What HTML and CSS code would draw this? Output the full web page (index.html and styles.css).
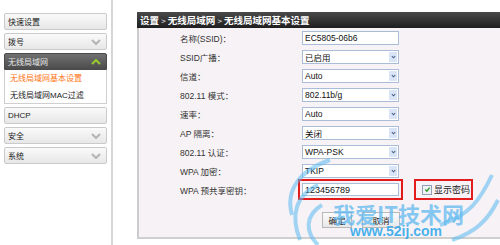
FILE: index.html
```html
<!DOCTYPE html>
<html lang="zh-CN">
<head>
    <meta charset="UTF-8">
    <title>无线局域网基本设置</title>
    <link rel="stylesheet" href="styles.css">
</head>
<body>
    <div class="page">
        <!-- 左侧菜单 -->
        <aside class="sidebar">
            <div class="menu-item">快速设置</div>
            <div class="menu-item">拨号
                <svg class="chevron" viewBox="0 0 10 6"><path d="M1 1 L5 5 L9 1"/></svg>
            </div>
            <div class="menu-group">
                <div class="menu-head">无线局域网
                    <svg class="chevron up" viewBox="0 0 10 6"><path d="M1 5 L5 1 L9 5"/></svg>
                </div>
                <ul class="submenu">
                    <li class="active">无线局域网基本设置</li>
                    <li>无线局域网MAC过滤</li>
                </ul>
            </div>
            <div class="menu-item">DHCP</div>
            <div class="menu-item">安全
                <svg class="chevron" viewBox="0 0 10 6"><path d="M1 1 L5 5 L9 1"/></svg>
            </div>
            <div class="menu-item">系统
                <svg class="chevron" viewBox="0 0 10 6"><path d="M1 1 L5 5 L9 1"/></svg>
            </div>
        </aside>

        <!-- 设置面板 -->
        <main class="panel">
            <div class="panel-title">设置 <span class="sep">&gt;</span> 无线局域网 <span class="sep">&gt;</span> 无线局域网基本设置</div>
            <div class="panel-body">
                <div class="row">
                    <span class="label">名称(SSID)：</span>
                    <span class="text-input">EC5805-06b6</span>
                </div>
                <div class="row">
                    <span class="label">SSID广播：</span>
                    <span class="select"><span class="value">已启用</span><span class="arrow"><svg viewBox="0 0 6 4"><path d="M1 1 L3 3 L5 1"/></svg></span></span>
                </div>
                <div class="row">
                    <span class="label">信道：</span>
                    <span class="select"><span class="value">Auto</span><span class="arrow"><svg viewBox="0 0 6 4"><path d="M1 1 L3 3 L5 1"/></svg></span></span>
                </div>
                <div class="row">
                    <span class="label">802.11 模式：</span>
                    <span class="select"><span class="value">802.11b/g</span><span class="arrow"><svg viewBox="0 0 6 4"><path d="M1 1 L3 3 L5 1"/></svg></span></span>
                </div>
                <div class="row">
                    <span class="label">速率：</span>
                    <span class="select"><span class="value">Auto</span><span class="arrow"><svg viewBox="0 0 6 4"><path d="M1 1 L3 3 L5 1"/></svg></span></span>
                </div>
                <div class="row">
                    <span class="label">AP 隔离：</span>
                    <span class="select"><span class="value">关闭</span><span class="arrow"><svg viewBox="0 0 6 4"><path d="M1 1 L3 3 L5 1"/></svg></span></span>
                </div>
                <div class="row">
                    <span class="label">802.11 认证：</span>
                    <span class="select"><span class="value">WPA-PSK</span><span class="arrow"><svg viewBox="0 0 6 4"><path d="M1 1 L3 3 L5 1"/></svg></span></span>
                </div>
                <div class="row">
                    <span class="label">WPA 加密：</span>
                    <span class="select"><span class="value">TKIP</span><span class="arrow"><svg viewBox="0 0 6 4"><path d="M1 1 L3 3 L5 1"/></svg></span></span>
                </div>
                <div class="row">
                    <span class="label">WPA 预共享密钥：</span>
                    <span class="text-input key marked">123456789</span>
                    <span class="show-pass">
                        <span class="checkbox"><svg viewBox="0 0 8 8"><path d="M1.5 4 L3.3 6 L6.5 1.8"/></svg></span>
                        显示密码
                    </span>
                </div>
                <div class="actions">
                    <span class="btn">确定</span>
                    <span class="btn wide">取消</span>
                </div>
            </div>
        </main>
    </div>

    <!-- 图片水印 -->
    <div class="watermark">
        <svg class="wings" viewBox="0 0 500 245">
            <path d="M330 160 C300 170 285 190 292 215"/>
            <path d="M318 185 C296 195 290 215 300 240"/>
            <path d="M322 205 C305 215 305 232 318 245"/>
            <path d="M492 175 C480 200 470 215 440 225"/>
            <path d="M498 200 C488 220 476 232 452 240"/>
        </svg>
        <div class="wm-title">我爱IT技术网</div>
        <div class="wm-url">www.52ij.com</div>
    </div>
</body>
</html>
```

FILE: styles.css
```css
body {
    margin: 0;
    background: #ffffff;
    font-family: "Liberation Sans", "Noto Sans CJK SC", sans-serif;
    color: #222222;
}

.page {
    display: flex;
    height: 245px;
    overflow: hidden;
}

/* 左侧菜单 */
.sidebar {
    width: 113px;
    flex-shrink: 0;
    padding: 13px 4px 0 4px;
    box-sizing: border-box;
    border-right: 2px solid #d6d6d6;
}

.menu-item,
.menu-head {
    height: 17px;
    box-sizing: border-box;
    display: flex;
    align-items: center;
    justify-content: space-between;
    padding: 0 5px 0 3px;
    font-size: 8px;
    border: 1px solid #cacaca;
    border-radius: 2px;
    background: linear-gradient(#fafafa, #e7e7e7);
    margin-bottom: 3px;
}

.menu-group {
    margin-bottom: 3px;
}

.menu-head {
    margin-bottom: 0;
    border-color: #4a4a4a;
    border-radius: 2px 2px 0 0;
    background: linear-gradient(#707070, #4c4c4c);
    color: #e8e8e8;
}

.chevron {
    width: 10px;
    height: 6px;
    fill: none;
    stroke: #b4b4b4;
    stroke-width: 2;
}

.chevron.up {
    stroke: #98cc2a;
}

.submenu {
    list-style: none;
    margin: 0;
    padding: 0 0 0 5px;
    height: 34px;
    box-sizing: border-box;
    border: 1px solid #cfcfcf;
    border-top: none;
    background: #ffffff;
    font-size: 8px;
}

.submenu li {
    height: 17px;
    line-height: 17px;
}

.submenu li.active {
    color: #ff7414;
}

/* 设置面板 */
.panel {
    flex: 1;
    margin: 12px 0 0 24px;
    height: 227px;
    display: flex;
    flex-direction: column;
}

.panel-title {
    height: 16px;
    line-height: 16px;
    padding-left: 3px;
    background: linear-gradient(#4a4a4a, #1e1e1e);
    color: #ffffff;
    font-family: "Noto Sans CJK SC", sans-serif;
    font-weight: bold;
    font-size: 9.5px;
    white-space: nowrap;
}

.panel-title .sep {
    font-size: 8px;
    font-weight: normal;
}

.panel-body {
    flex: 1;
    background: #f7f2f5;
    border-left: 2px solid #cccccc;
    border-bottom: 2px solid #cfcfcf;
    padding-left: 41px;
}

.row {
    display: flex;
    align-items: center;
    height: 19px;
}

.label {
    width: 122px;
    font-size: 8.5px;
    color: #333333;
}

.text-input,
.select {
    width: 97px;
    height: 14px;
    box-sizing: border-box;
    display: flex;
    align-items: center;
    background: #ffffff;
    border: 1px solid #a9bdd6;
    font-size: 8.5px;
    color: #111111;
}

.text-input {
    padding-left: 2px;
}

.text-input.key {
    height: 13px;
    font-size: 9px;
}

.marked {
    outline: 2px solid #e21c1c;
    outline-offset: 2px;
}

.select .value {
    flex: 1;
    padding-left: 2px;
}

.select .arrow {
    width: 8px;
    height: 10px;
    margin-right: 1px;
    background: #d9e5f7;
    display: flex;
    align-items: center;
    justify-content: center;
}

.select .arrow svg {
    width: 5px;
    height: 4px;
    fill: none;
    stroke: #4d6185;
    stroke-width: 1.3;
}

.show-pass {
    margin-left: 15px;
    height: 21px;
    box-sizing: border-box;
    display: flex;
    align-items: center;
    gap: 2px;
    padding: 0 1px 0 6px;
    border: 2px solid #e21c1c;
    font-family: "Noto Sans CJK SC", sans-serif;
    font-size: 9px;
    color: #222222;
}

.checkbox {
    width: 10px;
    height: 10px;
    box-sizing: border-box;
    border: 1px solid #8f9fb5;
    background: #f1f3f6;
    display: flex;
    align-items: center;
    justify-content: center;
}

.checkbox svg {
    width: 7px;
    height: 7px;
    fill: none;
    stroke: #2f9a2f;
    stroke-width: 1.6;
}

.actions {
    display: flex;
    gap: 10px;
    margin-top: 13px;
    padding-left: 142px;
}

.btn {
    width: 30px;
    height: 16px;
    box-sizing: border-box;
    border: 1px solid #b8b8b8;
    background: linear-gradient(#fbfbfb, #e8e8e8);
    font-size: 8.5px;
    display: flex;
    align-items: center;
    justify-content: center;
    color: #222222;
}

.btn.wide {
    width: 38px;
}

/* 水印 */
.watermark {
    position: absolute;
    left: 0;
    top: 0;
    width: 500px;
    height: 245px;
    pointer-events: none;
}

.wings {
    position: absolute;
    left: 0;
    top: 0;
    width: 500px;
    height: 245px;
    fill: none;
    stroke: rgba(90, 185, 240, 0.55);
    stroke-width: 4;
}

.wm-title {
    position: absolute;
    left: 333px;
    top: 202px;
    line-height: 1;
    font-family: "Noto Sans CJK SC", sans-serif;
    font-weight: bold;
    font-size: 22px;
    color: rgba(95, 185, 240, 0.75);
    white-space: nowrap;
}

.wm-url {
    position: absolute;
    left: 350px;
    top: 224px;
    line-height: 1;
    font-family: "Liberation Sans", sans-serif;
    font-weight: bold;
    font-size: 14px;
    color: rgba(40, 165, 235, 0.85);
}
```
